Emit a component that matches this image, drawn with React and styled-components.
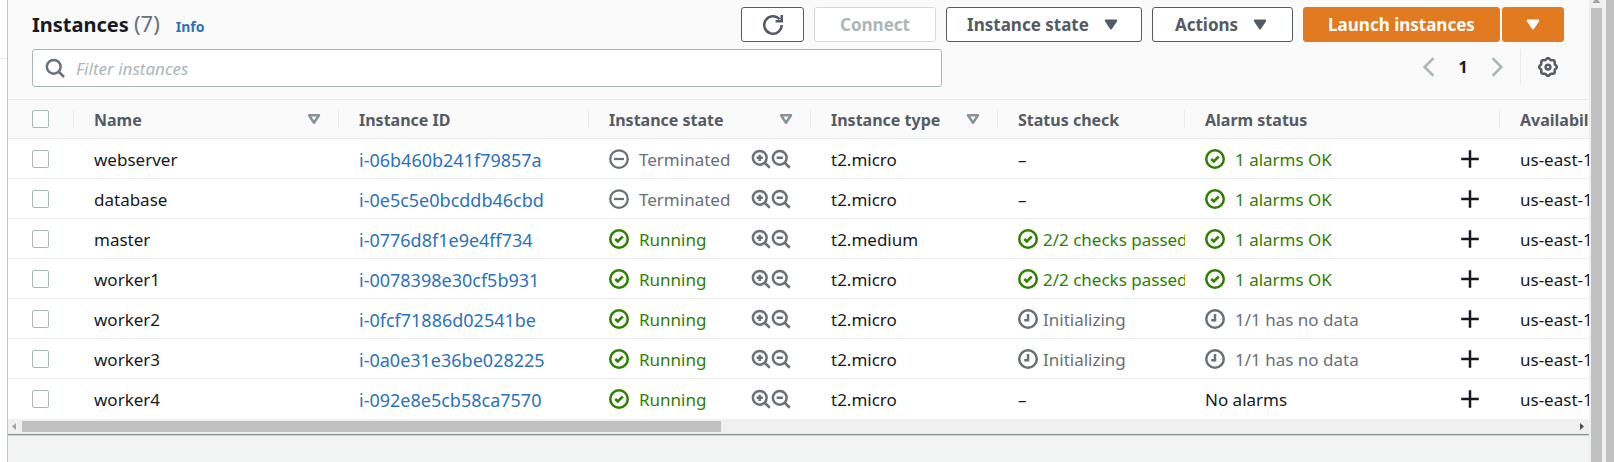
import React from "react";
import styled, { createGlobalStyle } from "styled-components";

const GlobalStyle = createGlobalStyle`
  *, *::before, *::after { box-sizing: border-box; }
  html, body, #root { height: 100%; }
  body {
    margin: 0;
    overflow: hidden;
    background: #f2f3f3;
    color: #16191f;
    font-family: "Noto Sans", "Open Sans", sans-serif;
    font-size: 17px;
    line-height: 24px;
  }
  button, input { font: inherit; }
`;

const Page = styled.div`
  display: flex;
  min-height: 100%;
`;

const NavEdge = styled.div`
  width: 8px;
  flex: none;
  background: #fff;
  border-right: 1px solid #c0c4c6;
  &::before {
    content: "";
    display: block;
    height: 59px;
    border-bottom: 1px solid #eaeded;
  }
`;

const Main = styled.main`
  flex: 1;
  min-width: 0;
`;

const Panel = styled.section`
  background: #fafafa;
  border-bottom: 1px solid #879596;
  box-shadow: 0 1px 0 #d0d4d6;
`;

const TitleBar = styled.header`
  display: flex;
  align-items: flex-start;
  justify-content: space-between;
  padding: 7px 25px 0 24px;
`;

const TitleGroup = styled.div`
  display: flex;
  align-items: baseline;
  gap: 16px;
`;

const Title = styled.h2`
  margin: 0;
  font-size: 20px;
  line-height: 32px;
  font-weight: 700;
`;

const Count = styled.span`
  color: #687078;
  font-size: 22px;
  font-weight: 400;
`;

const InfoLink = styled.a`
  color: #2a72bd;
  font-size: 14px;
  font-weight: 700;
  text-decoration: none;
`;

const ButtonRow = styled.div`
  display: flex;
  gap: 10px;
`;

const SplitButton = styled.div`
  display: flex;
  gap: 2px;
`;

const tones = {
  normal: { bg: "#fff", fg: "#545b64", line: "#545b64" },
  disabled: { bg: "#fff", fg: "#aab7b8", line: "#d5dbdb" },
  primary: { bg: "#e17a21", fg: "#fff", line: "#e17a21" },
};

const Button = styled.button`
  display: inline-flex;
  align-items: center;
  justify-content: center;
  gap: 12px;
  height: 35px;
  padding: 0;
  width: ${(p) => p.$width || "auto"};
  border: 1px solid ${(p) => tones[p.$tone || "normal"].line};
  border-radius: 3px;
  background: ${(p) => tones[p.$tone || "normal"].bg};
  color: ${(p) => tones[p.$tone || "normal"].fg};
  font-weight: 700;
  white-space: nowrap;
`;

const FilterBar = styled.div`
  display: flex;
  align-items: flex-start;
  justify-content: space-between;
  padding: 7px 25px 12px 24px;
`;

const SearchBox = styled.label`
  display: flex;
  align-items: center;
  gap: 11px;
  flex: 0 1 910px;
  height: 38px;
  padding: 0 12px;
  border: 1px solid #aab7b8;
  border-radius: 3px;
  background: #fff;
  color: #687078;
`;

const SearchInput = styled.input`
  flex: 1;
  min-width: 0;
  padding: 2px 0 0;
  border: 0;
  outline: 0;
  background: none;
  color: #16191f;
  &::placeholder { color: #aab7b8; font-style: italic; opacity: 1; }
`;

const Pager = styled.nav`
  display: flex;
  align-items: center;
  height: 35px;
`;

const IconButton = styled.button`
  display: inline-flex;
  align-items: center;
  justify-content: center;
  width: 20px;
  height: 20px;
  padding: 0;
  border: 0;
  background: none;
  color: ${(p) => p.$color || "#687078"};
`;

const PageNumber = styled.button`
  width: 48px;
  padding: 0;
  border: 0;
  background: none;
  color: #16191f;
  font-size: 16px;
  font-weight: 700;
`;

const Preferences = styled.div`
  display: flex;
  align-items: center;
  height: 35px;
  margin-left: 13px;
  padding: 0 6px 0 17px;
  border-left: 1px solid #eaeded;
`;

const TableViewport = styled.div`
  overflow: hidden;
  border-top: 1px solid #eaeded;
`;

const Table = styled.table`
  width: 3500px;
  table-layout: fixed;
  border-collapse: separate;
  border-spacing: 0;
`;

const Col = styled.col`
  width: ${(p) => (p.$width ? `${p.$width}px` : "auto")};
`;

const HeadCell = styled.th`
  height: 39px;
  padding: 0 0 0 20px;
  border-bottom: 1px solid #eaeded;
  color: #545b64;
  font-size: 16px;
  font-weight: 700;
  text-align: left;
  white-space: nowrap;
`;

const HeadInner = styled.div`
  display: flex;
  align-items: center;
  justify-content: space-between;
  height: 18px;
  padding-right: 14px;
  border-right: 1px solid #eaeded;
`;

const SortIcon = styled.span`
  display: flex;
  color: #879596;
`;

const Row = styled.tr`
  background: #fff;
  &:last-child td { border-bottom-color: #fff; }
`;

const Cell = styled.td`
  height: 40px;
  padding: 0 0 0 20px;
  border-bottom: 1px solid #eaeded;
  white-space: nowrap;
`;

const CellLine = styled.div`
  display: flex;
  align-items: center;
  justify-content: space-between;
  margin-right: ${(p) => p.$end || 0}px;
  overflow: hidden;
`;

const Label = styled.span`
  display: block;
  padding-top: 2px;
`;

const CheckCell = styled(Cell)`
  padding-left: 24px;
`;

const CheckHead = styled(HeadCell)`
  padding-left: 24px;
`;

const Checkbox = styled.input`
  appearance: none;
  display: block;
  width: 17px;
  height: 18px;
  margin: 0;
  border: 1px solid #aab7b8;
  border-radius: 2px;
  background: #fff;
`;

const IdLink = styled.a`
  display: block;
  padding-top: 2px;
  color: #2a72bd;
  font-size: 18px;
  text-decoration: none;
`;

const statusColor = { ok: "#2f8000", off: "#687078", wait: "#687078" };

const Status = styled.span`
  display: inline-flex;
  align-items: center;
  gap: ${(p) => (p.$tight ? 5 : 10)}px;
  color: ${(p) => statusColor[p.$kind]};
`;

const ZoomPair = styled.span`
  display: inline-flex;
`;

const HScroll = styled.div`
  display: flex;
  align-items: center;
  height: 15px;
  background: #f0f0f0;
`;

const ScrollArrow = styled.svg`
  flex: none;
  width: 14px;
  height: 9px;
  fill: ${(p) => p.$color};
`;

const HTrack = styled.div`
  flex: 1;
`;

const HThumb = styled.div`
  width: 45%;
  height: 11px;
  background: #c1c1c1;
`;

const VScroll = styled.div`
  display: flex;
  flex-direction: column;
  flex: none;
  width: 17px;
  padding: 0 4px 0 2px;
  background: #f0f0f0;
`;

const VArrow = styled.svg`
  display: block;
  width: 11px;
  height: 8px;
  fill: #a3a3a3;
`;

const VThumb = styled.div`
  flex: 1;
  background: #c1c1c1;
`;

const OuterThumb = styled.div`
  flex: none;
  width: 8px;
  background: #c1c1c1;
`;

const IconSvg = styled.svg`
  display: block;
  flex: none;
  width: 20px;
  height: 20px;
  fill: none;
  stroke: currentColor;
  stroke-width: ${(p) => p.$weight || 2};
`;

function Icon({ children, weight }) {
  return (
    <IconSvg viewBox="0 0 16 16" $weight={weight} aria-hidden="true">
      {children}
    </IconSvg>
  );
}

// Outline of an eight-lobed cog centred in the 16-unit icon box.
const cogPath =
  Array.from({ length: 96 }, (_, i) => {
    const angle = (i / 96) * Math.PI * 2;
    const radius = 6.5 + 0.6 * Math.cos(8 * angle);
    const x = 8 + radius * Math.cos(angle);
    const y = 8 + radius * Math.sin(angle);
    return `${i ? "L" : "M"}${x.toFixed(2)} ${y.toFixed(2)}`;
  }).join("") + "z";

const CaretFilled = () => (
  <Icon><path d="M4 4.500h8l-4 6z" fill="currentColor" strokeLinejoin="round" /></Icon>
);
const CaretHollow = () => (
  <Icon><path d="M4 5h8l-4 6z" strokeLinejoin="round" /></Icon>
);
const RefreshIcon = () => (
  <Icon><path d="M15 8a7 7 0 1 1-1.700-4.600M10 5h5V0" /></Icon>
);
const SearchIcon = () => (
  <Icon><circle cx="7" cy="7" r="5.5" /><path d="m10.800 10.800 4.400 4.400" /></Icon>
);
const GearIcon = () => (
  <Icon><circle cx="8" cy="8" r="1.9" /><path d={cogPath} /></Icon>
);
const PlusIcon = () => (
  <Icon><path d="M8 1v14M1 8h14" /></Icon>
);
const ZoomInIcon = () => (
  <Icon><circle cx="7" cy="7" r="5.5" /><path d="m11 11 4 4M7 4.500v5M4.500 7h5" /></Icon>
);
const ZoomOutIcon = () => (
  <Icon><circle cx="7" cy="7" r="5.5" /><path d="m11 11 4 4M4.500 7h5" /></Icon>
);

const statusGlyph = {
  ok: "m5 8 2 2 4-4",
  off: "M4 8h8",
  wait: "M8 4v5H5",
};

function StatusText({ kind, tight, children }) {
  return (
    <Status $kind={kind} $tight={tight}>
      <Icon weight={kind === "off" ? 1.8 : 2}>
        <circle cx="8" cy="8" r="7" />
        <path d={statusGlyph[kind]} />
      </Icon>
      <Label>{children}</Label>
    </Status>
  );
}

const columns = [
  { label: "Name", width: 265, sortable: true },
  { label: "Instance ID", width: 250 },
  { label: "Instance state", width: 222, sortable: true },
  { label: "Instance type", width: 187, sortable: true },
  { label: "Status check", width: 187 },
  { label: "Alarm status", width: 315 },
  { label: "Availability Zone" },
];

const none = { text: "–" };
const passed = { kind: "ok", text: "2/2 checks passed" };
const initializing = { kind: "wait", text: "Initializing" };
const alarmsOk = { kind: "ok", text: "1 alarms OK" };
const noData = { kind: "wait", text: "1/1 has no data" };
const terminated = { kind: "off", text: "Terminated" };
const running = { kind: "ok", text: "Running" };

const instances = [
  { name: "webserver", id: "i-06b460b241f79857a", state: terminated, type: "t2.micro", check: none, alarm: alarmsOk },
  { name: "database", id: "i-0e5c5e0bcddb46cbd", state: terminated, type: "t2.micro", check: none, alarm: alarmsOk },
  { name: "master", id: "i-0776d8f1e9e4ff734", state: running, type: "t2.medium", check: passed, alarm: alarmsOk },
  { name: "worker1", id: "i-0078398e30cf5b931", state: running, type: "t2.micro", check: passed, alarm: alarmsOk },
  { name: "worker2", id: "i-0fcf71886d02541be", state: running, type: "t2.micro", check: initializing, alarm: noData },
  { name: "worker3", id: "i-0a0e31e36be028225", state: running, type: "t2.micro", check: initializing, alarm: noData },
  { name: "worker4", id: "i-092e8e5cb58ca7570", state: running, type: "t2.micro", check: none, alarm: { text: "No alarms" } },
];

function MaybeStatus({ value, tight }) {
  return value.kind ? (
    <StatusText kind={value.kind} tight={tight}>{value.text}</StatusText>
  ) : (
    <Label>{value.text}</Label>
  );
}

function InstanceRow({ item }) {
  return (
    <Row>
      <CheckCell><Checkbox type="checkbox" aria-label={`Select ${item.name}`} /></CheckCell>
      <Cell><Label>{item.name}</Label></Cell>
      <Cell><IdLink href={`#${item.id}`}>{item.id}</IdLink></Cell>
      <Cell>
        <CellLine $end={20}>
          <MaybeStatus value={item.state} />
          <ZoomPair>
            <IconButton aria-label="Include state in filter"><ZoomInIcon /></IconButton>
            <IconButton aria-label="Exclude state from filter"><ZoomOutIcon /></IconButton>
          </ZoomPair>
        </CellLine>
      </Cell>
      <Cell><Label>{item.type}</Label></Cell>
      <Cell><CellLine><MaybeStatus value={item.check} tight /></CellLine></Cell>
      <Cell>
        <CellLine $end={20}>
          <MaybeStatus value={item.alarm} />
          <IconButton $color="#16191f" aria-label="Create alarm"><PlusIcon /></IconButton>
        </CellLine>
      </Cell>
      <Cell><Label>us-east-1a</Label></Cell>
    </Row>
  );
}

export default function App() {
  return (
    <>
      <GlobalStyle />
      <Page>
        <NavEdge />
        <Main>
          <Panel>
            <TitleBar>
              <TitleGroup>
                <Title>Instances <Count>(7)</Count></Title>
                <InfoLink href="#info">Info</InfoLink>
              </TitleGroup>
              <ButtonRow>
                <Button $width="63px" aria-label="Refresh"><RefreshIcon /></Button>
                <Button $tone="disabled" $width="122px" disabled>Connect</Button>
                <Button $width="196px">Instance state <CaretFilled /></Button>
                <Button $width="141px">Actions <CaretFilled /></Button>
                <SplitButton>
                  <Button $tone="primary" $width="197px">Launch instances</Button>
                  <Button $tone="primary" $width="62px" aria-label="More launch options"><CaretFilled /></Button>
                </SplitButton>
              </ButtonRow>
            </TitleBar>
            <FilterBar>
              <SearchBox>
                <SearchIcon />
                <SearchInput type="text" placeholder="Filter instances" aria-label="Filter instances" />
              </SearchBox>
              <Pager aria-label="Pagination">
                <IconButton $color="#aab7b8" aria-label="Previous page"><Icon><path d="M11.500 1 4.500 8l7 7" /></Icon></IconButton>
                <PageNumber>1</PageNumber>
                <IconButton $color="#aab7b8" aria-label="Next page"><Icon><path d="m4.500 1 7 7-7 7" /></Icon></IconButton>
                <Preferences>
                  <IconButton $color="#545b64" aria-label="Preferences"><GearIcon /></IconButton>
                </Preferences>
              </Pager>
            </FilterBar>
            <TableViewport>
              <Table>
                <colgroup>
                  <Col $width={66} />
                  {columns.map((c) => <Col key={c.label} $width={c.width} />)}
                </colgroup>
                <thead>
                  <tr>
                    <CheckHead>
                      <HeadInner><Checkbox type="checkbox" aria-label="Select all instances" /></HeadInner>
                    </CheckHead>
                    {columns.map((c) => (
                      <HeadCell key={c.label} scope="col">
                        <HeadInner>
                          <Label>{c.label}</Label>
                          {c.sortable && <SortIcon><CaretHollow /></SortIcon>}
                        </HeadInner>
                      </HeadCell>
                    ))}
                  </tr>
                </thead>
                <tbody>
                  {instances.map((item) => <InstanceRow key={item.id} item={item} />)}
                </tbody>
              </Table>
            </TableViewport>
            <HScroll>
              <ScrollArrow viewBox="0 0 14 9" $color="#a3a3a3"><path d="M8 1v7L4 4.500z" /></ScrollArrow>
              <HTrack><HThumb /></HTrack>
              <ScrollArrow viewBox="0 0 14 9" $color="#505050"><path d="M5 1v7l4-3.500z" /></ScrollArrow>
            </HScroll>
          </Panel>
        </Main>
        <VScroll>
          <VArrow viewBox="0 0 11 8"><path d="M5 -2 9.500 3h-8z" /></VArrow>
          <VThumb />
        </VScroll>
        <OuterThumb />
      </Page>
    </>
  );
}
